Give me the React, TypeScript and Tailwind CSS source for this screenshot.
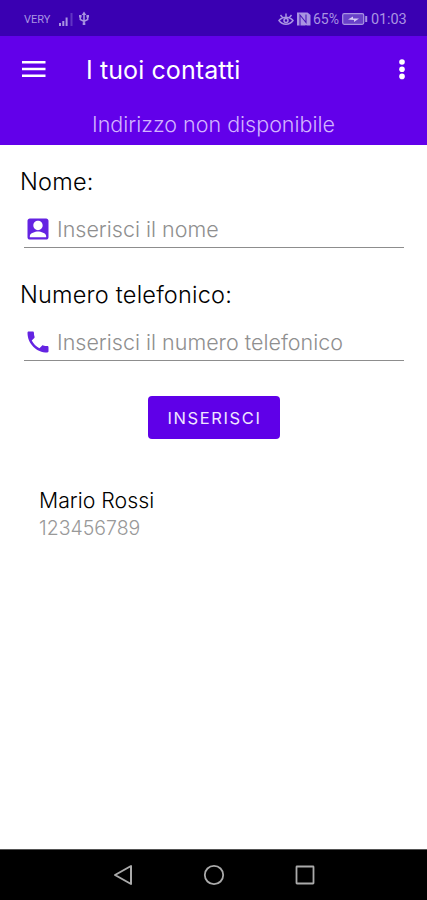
import type { ReactNode } from "react";

function StatusBar() {
  return (
    <div className="flex h-9 items-center bg-[#3a00b2] pt-0.5 pl-6 pr-5 text-[#a994e2]">
      <span className="w-[34px] font-['Roboto',sans-serif] text-[11px] leading-none">VERY</span>
      <svg width="16" height="16" viewBox="0 0 16 16" className="shrink-0" fill="currentColor">
        <path d="M1 12h2v3H1zM4.3 10h2v5h-2zM7.6 6.500h2V15h-2z" />
        <path d="M12.500 2h2v13h-2z" opacity=".35" />
      </svg>
      <svg width="12" height="16" viewBox="0 0 12 16" className="ml-1 shrink-0" fill="none" stroke="currentColor" strokeWidth="1.500">
        <path d="M6 2v11M2.300 6v2.500L6 10.500l3.700-2V6" />
        <path d="M6 .5l2.300 3.500H3.700zM1 4h2.600v2.600H1zM8.400 4H11v2.600H8.400zM4.700 11.500h2.600V14H4.700z" fill="currentColor" stroke="none" />
      </svg>
      <div className="ml-auto flex items-center font-['Roboto',sans-serif]">
        <svg width="16" height="14" viewBox="0 0 16 14" className="relative -left-px" fill="none" stroke="currentColor" strokeWidth="1.500">
          <path d="M1 8.500C4.500 4 11.500 4 15 8.500 11.500 13.500 4.500 13.500 1 8.500zM8 5V1.500M4.500 5.500L2.500 3M11.500 5.500l2-2.500" />
          <circle cx="8" cy="8.500" r="2" />
        </svg>
        <svg width="14" height="14" viewBox="0 0 14 14" className="relative -left-px ml-[3px]">
          <path d="M0 .5h10.500L13.500 3v10.500H0z" fill="currentColor" />
          <path d="M3 14V3l6 7.500V2.500M9 14v-1" fill="none" stroke="#4a16b8" strokeWidth="1.100" />
        </svg>
        <span className="ml-[1px] w-[29px] text-[14px] leading-none">65%</span>
        <svg width="26" height="12" viewBox="0 0 26 12" className="shrink-0">
          <rect x=".7" y=".7" width="21" height="10.600" rx="1.500" fill="#6941c8" stroke="currentColor" strokeWidth="1.200" />
          <path d="M23.200 3h2v6h-2z" fill="currentColor" />
          <path d="M6 6.500l5-3v2h6L12 9V7z" fill="#d7cbf5" />
        </svg>
        <span className="ml-[3px] w-[36px] whitespace-nowrap pt-[2px] text-[14.5px] leading-none tracking-[-0.1px]">01:03</span>
      </div>
    </div>
  );
}

function AppBar() {
  return (
    <header className="h-[109px] bg-[#6200ea] text-white">
      <div className="flex h-[67px] items-center pr-2.5 pl-[21px]">
        <svg width="25" height="18" viewBox="0 0 25 18" className="relative -top-px" fill="currentColor">
          <path d="M1 1h23.500v2.500H1zM1 7.750h23.500v2.500H1zM1 14.500h23.500V17H1z" />
        </svg>
        <h1 className="ml-10 pt-px text-[25px] leading-8 font-normal tracking-[0.1px] whitespace-nowrap">I tuoi contatti</h1>
        <svg width="30" height="22" viewBox="0 0 30 22" className="relative -top-px ml-auto" fill="currentColor">
          <circle cx="15" cy="4" r="2.800" />
          <circle cx="15" cy="11.200" r="2.800" />
          <circle cx="15" cy="18.400" r="2.800" />
        </svg>
      </div>
      <p className="text-center text-[21.5px] leading-[42px] font-light text-[#d3b3ff]">Indirizzo non disponibile</p>
    </header>
  );
}

function Field({ label, hint, icon }: { label: string; hint: string; icon: ReactNode }) {
  return (
    <div className="h-[113px]">
      <label className="ml-5 block h-[32px] text-[23.5px] leading-[34px] font-light tracking-[0.2px] text-black">{label}</label>
      <div className="mr-[23px] ml-6 flex h-[51px] items-end border-b-[1.5px] border-[#8d8d8d] pb-[2px]">
        <svg width="28" height="28" viewBox="0 0 24 24" className="mb-[2px] shrink-0" fill="#6423e2">
          {icon}
        </svg>
        <span className="mb-px ml-[5px] text-[21.5px] leading-[30px] font-light whitespace-nowrap text-[#8f8f8f]">{hint}</span>
      </div>
    </div>
  );
}

function NavigationBar() {
  return (
    <nav className="flex h-[51px] justify-center gap-[67px] border-t border-[#555] bg-black pt-[13px]">
      <svg width="24" height="24" viewBox="0 0 24 24" fill="none" stroke="#aaa" strokeWidth="2" strokeLinejoin="round">
        <path d="M20 3v18L4 12z" />
      </svg>
      <svg width="24" height="24" viewBox="0 0 24 24" fill="none" stroke="#aaa" strokeWidth="1.800">
        <circle cx="12" cy="12" r="9.200" />
      </svg>
      <svg width="24" height="24" viewBox="0 0 24 24" fill="none" stroke="#aaa" strokeWidth="1.800">
        <rect x="3.500" y="3.500" width="17" height="17" rx=".5" />
      </svg>
    </nav>
  );
}

export default function App() {
  return (
    <div className="flex h-[900px] w-[427px] flex-col bg-white font-['Inter',sans-serif]">
      <StatusBar />
      <AppBar />
      <main className="flex flex-1 flex-col pt-5">
        <Field
          label="Nome:"
          hint="Inserisci il nome"
          icon={<path d="M3 5v14c0 1.100.89 2 2 2h14c1.100 0 2-.9 2-2V5c0-1.100-.9-2-2-2H5c-1.110 0-2 .9-2 2zm13 4c0 2.200-1.800 4-4 4s-4-1.800-4-4 1.800-4 4-4 4 1.800 4 4zM5 18c0-2.300 4.700-3.800 7-3.800s7 1.500 7 3.800v1H5v-1z" />}
        />
        <Field
          label="Numero telefonico:"
          hint="Inserisci il numero telefonico"
          icon={<path d="M6.620 10.790c1.440 2.830 3.760 5.140 6.590 6.590l2.200-2.200c.27-.27.67-.36 1.020-.24 1.120.37 2.330.57 3.570.57.55 0 1 .45 1 1V20c0 .55-.45 1-1 1-9.390 0-17-7.610-17-17 0-.55.45-1 1-1h3.500c.55 0 1 .45 1 1 0 1.250.2 2.450.57 3.570.11.35.03.74-.25 1.020l-2.200 2.200z" />}
        />
        <button className="mt-[5px] h-[43px] w-[132px] self-center rounded-[4px] bg-[#5f00e8] pt-px pl-[2px] text-[16.5px] leading-none tracking-[1.6px] text-[#f0e6ff]">
          INSERISCI
        </button>
        <div className="mt-[46px] ml-[39px]">
          <p className="text-[21.3px] leading-[30px] font-light text-black">Mario Rossi</p>
          <p className="text-[19.5px] leading-[27px] font-light text-[#999]">123456789</p>
        </div>
      </main>
      <NavigationBar />
    </div>
  );
}
